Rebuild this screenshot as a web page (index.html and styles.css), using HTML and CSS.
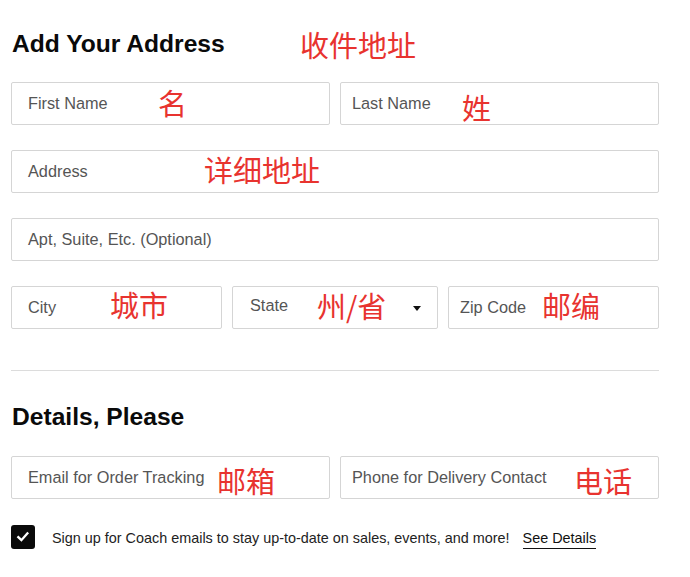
FILE: index.html
```html
<!DOCTYPE html>
<html lang="en">
<head>
<meta charset="utf-8">
<title>Add Your Address</title>
<link rel="stylesheet" href="styles.css">
</head>
<body>
<div class="page">
  <div class="title-row">
    <h1 class="heading">Add Your Address</h1>
    <span class="note note-title">收件地址</span>
  </div>

  <div class="row">
    <div class="field pad-l half">First Name<span class="note n-first">名</span></div>
    <div class="field pad-r half">Last Name<span class="note n-last">姓</span></div>
  </div>

  <div class="row">
    <div class="field pad-l full">Address<span class="note n-addr">详细地址</span></div>
  </div>

  <div class="row">
    <div class="field pad-l full">Apt, Suite, Etc. (Optional)</div>
  </div>

  <div class="row">
    <div class="field pad-l city">City<span class="note n-city">城市</span></div>
    <div class="field pad-s state"><span class="state-label">State</span><span class="caret"></span><span class="note n-state">州/省</span></div>
    <div class="field pad-r zip">Zip Code<span class="note n-zip">邮编</span></div>
  </div>

  <hr class="divider">

  <h2 class="heading sub">Details, Please</h2>

  <div class="row">
    <div class="field pad-l half">Email for Order Tracking<span class="note n-email">邮箱</span></div>
    <div class="field pad-r half">Phone for Delivery Contact<span class="note n-phone">电话</span></div>
  </div>

  <div class="check-row">
    <span class="checkbox">
      <svg width="24" height="24" viewBox="0 0 24 24"><path d="M7.3 12.2 L10.4 15.2 L16.4 8.4" fill="none" stroke="#fff" stroke-width="2.3" stroke-linecap="square" stroke-linejoin="miter"/></svg>
    </span>
    <span class="check-text">Sign up for Coach emails to stay up-to-date on sales, events, and more!</span>
    <span class="see-details">See Details</span>
  </div>
</div>
</body>
</html>
```
FILE: styles.css
```css
html, body {
  margin: 0;
  padding: 0;
  background: #ffffff;
}

.page {
  width: 648px;
  padding: 29px 31px 0 11px;
  font-family: "Liberation Sans", Arial, sans-serif;
  color: #111;
}

.title-row {
  position: relative;
  margin-bottom: 23px;
}

.heading {
  margin: 0;
  font-size: 24.6px;
  line-height: 30px;
  font-weight: bold;
  color: #0a0a0a;
  padding-left: 1px;
}

.sub {
  margin: 31px 0 24px 0;
}

.row {
  display: flex;
  gap: 10px;
  margin-bottom: 25px;
}

.row:last-of-type {
  margin-bottom: 0;
}

.field {
  position: relative;
  box-sizing: border-box;
  height: 43px;
  border: 1px solid #d5d5d5;
  border-radius: 2px;
  display: flex;
  align-items: center;
  font-size: 16.3px;
  color: #555;
  background: #fff;
  flex: none;
}

.pad-l { padding-left: 16px; }
.pad-r { padding-left: 11px; }
.pad-s { padding-left: 17px; padding-right: 16px; justify-content: space-between; }

.half { width: 319px; }
.full { width: 648px; }
.city { width: 211px; }
.state { width: 206px; }
.zip { width: 211px; }

.state-label {
  position: relative;
  top: -2px;
}

.caret {
  width: 0;
  height: 0;
  border-left: 4px solid transparent;
  border-right: 4px solid transparent;
  border-top: 5px solid #111;
  margin-top: 2px;
}

.note {
  position: absolute;
  font-family: "Noto Sans CJK SC", "Noto Sans", sans-serif;
  font-size: 29px;
  line-height: 29px;
  color: #e8332f;
  white-space: nowrap;
}

.note-title { left: 289px; top: 1px; }
.n-first { left: 146px; top: 5px; }
.n-last { left: 121px; top: 10px; }
.n-addr { left: 192px; top: 4px; }
.n-city { left: 98px; top: 3px; }
.n-state { left: 84px; top: 4px; }
.n-zip { left: 93px; top: 4px; }
.n-email { left: 205px; top: 9px; }
.n-phone { left: 233px; top: 9px; }

.divider {
  margin: 41px 0 0 0;
  border: 0;
  border-top: 1px solid #dcdcdc;
  height: 0;
}

.check-row {
  display: flex;
  align-items: center;
  margin-top: 25px;
  font-size: 14.4px;
  color: #222;
}

.checkbox {
  width: 24px;
  height: 24px;
  background: #0a0a0a;
  border-radius: 3px;
  display: block;
  flex: none;
}

.checkbox svg { display: block; }

.check-text {
  margin-left: 17px;
  position: relative;
  top: 1px;
}

.see-details {
  margin-left: 13px;
  color: #111;
  border-bottom: 1.5px solid #111;
  padding-bottom: 2px;
  margin-top: 6px;
}
```
